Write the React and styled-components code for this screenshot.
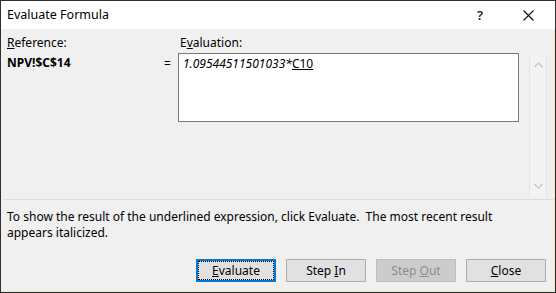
import React from 'react'
import styled, { createGlobalStyle } from 'styled-components'

const Global = createGlobalStyle`
  html, body {
    margin: 0;
    padding: 0;
    background: #f0f0f0;
  }
  * {
    box-sizing: border-box;
  }
`;

function App() {
  return (
    <>
      <Global />
      <Dialog>
        <TitleBar>
          <Title>Evaluate Formula</Title>
          <TitleButtons>
            <HelpBtn>?</HelpBtn>
            <CloseBtn>
              <svg width="11" height="11" viewBox="0 0 11 11">
                <path d="M0.5 0.5 L10.5 10.5 M10.5 0.5 L0.5 10.5" stroke="#111" strokeWidth="1.1" fill="none" />
              </svg>
            </CloseBtn>
          </TitleButtons>
        </TitleBar>
        <Body>
          <Fields>
            <Label><u>R</u>eference:</Label>
            <span />
            <Label $indent>E<u>v</u>aluation:</Label>
            <span />
            <RefValue>NPV!$C$14</RefValue>
            <Equals>=</Equals>
            <FormulaBox>
              <Italic>1.09544511501033*</Italic><u>C10</u>
            </FormulaBox>
            <Scrollbar>
              <Chevron>
                <svg width="9" height="6" viewBox="0 0 9 6">
                  <path d="M0.5 5 L4.5 1 L8.5 5" stroke="#c3c3c3" strokeWidth="1.2" fill="none" />
                </svg>
              </Chevron>
              <Chevron>
                <svg width="9" height="6" viewBox="0 0 9 6">
                  <path d="M0.5 1 L4.5 5 L8.5 1" stroke="#c3c3c3" strokeWidth="1.2" fill="none" />
                </svg>
              </Chevron>
            </Scrollbar>
          </Fields>
          <Separator />
          <Message>
            To show the result of the underlined expression, click Evaluate.&nbsp; The most recent result<br />
            appears italicized.
          </Message>
          <ButtonRow>
            <Button $default><ButtonText $focus><u>E</u>valuate</ButtonText></Button>
            <Button><ButtonText>Step <u>I</u>n</ButtonText></Button>
            <Button disabled><ButtonText>Step <u>O</u>ut</ButtonText></Button>
            <Button><ButtonText><u>C</u>lose</ButtonText></Button>
          </ButtonRow>
        </Body>
      </Dialog>
    </>
  )
}

const Dialog = styled.div`
  width: 556px;
  height: 293px;
  display: flex;
  flex-direction: column;
  border: 1px solid #2e2e2e;
  box-shadow: inset -1px -1px 0 #efe4c6;
  background: #f0f0f0;
  font-family: "Noto Sans", "Open Sans", sans-serif;
  font-size: 12px;
  line-height: 16px;
  color: #000;
  overflow: hidden;
`;
const TitleBar = styled.div`
  height: 28px;
  flex-shrink: 0;
  display: flex;
  align-items: center;
  justify-content: space-between;
  background: #fff;
  padding-left: 6px;
`;
const Title = styled.div`
  font-size: 12.5px;
  color: #000;
`;
const TitleButtons = styled.div`
  display: flex;
  align-items: center;
  height: 100%;
  padding-right: 4px;
`;
const HelpBtn = styled.div`
  width: 50px;
  text-align: center;
  font-size: 13px;
  font-weight: 600;
  color: #222;
`;
const CloseBtn = styled.div`
  width: 46px;
  height: 100%;
  display: flex;
  align-items: center;
  justify-content: center;
`;
const Body = styled.div`
  flex: 1;
  display: flex;
  flex-direction: column;
  padding: 6px 9px 10px 6px;
`;
const Fields = styled.div`
  display: grid;
  grid-template-columns: 150px 21px 341px 1fr;
  grid-template-rows: 18px auto;
`;
const Label = styled.div`
  padding-left: ${p => (p.$indent ? '2px' : '0')};
  color: #000;
`;
const RefValue = styled.div`
  font-weight: 700;
  margin-top: 2px;
`;
const Equals = styled.div`
  text-align: center;
  margin-top: 3px;
`;
const FormulaBox = styled.div`
  height: 69px;
  background: #fff;
  border: 1px solid #7a7a7a;
  padding: 2px 4px;
`;
const Italic = styled.i`
  font-style: italic;
`;
const Scrollbar = styled.div`
  margin-left: 10px;
  margin-top: 2px;
  width: 18px;
  height: 141px;
  display: flex;
  flex-direction: column;
  justify-content: space-between;
  align-items: center;
  background: #f3f3f3;
  border-left: 1px solid #e4e4e4;
  border-right: 1px solid #e4e4e4;
  padding: 6px 0;
`;
const Chevron = styled.div`
  display: flex;
  height: 8px;
  align-items: center;
`;
const Separator = styled.div`
  height: 1px;
  margin: 3px -8px 0 -4px;
  background: #dcdcdc;
`;
const Message = styled.div`
  margin-top: 9px;
  white-space: nowrap;
`;
const ButtonRow = styled.div`
  margin-top: auto;
  display: flex;
  justify-content: flex-end;
  gap: 10px;
`;
const Button = styled.button`
  width: 80px;
  height: 23px;
  font-family: inherit;
  font-size: 12px;
  padding: 0;
  display: flex;
  align-items: center;
  justify-content: center;
  background: #e1e1e1;
  color: #000;
  border: 1px solid ${p => (p.$default ? '#0078d7' : '#adadad')};
  box-shadow: ${p => (p.$default ? 'inset 0 0 0 1px #0078d7' : 'none')};
  &:disabled {
    background: #cccccc;
    border-color: #bfbfbf;
    color: #8d8d8d;
  }
`;
const ButtonText = styled.span`
  display: block;
  white-space: pre;
  text-align: center;
  line-height: 15px;
  ${p => p.$focus && `
    width: 72px;
    height: 15px;
    outline: 1px dotted #000;
    outline-offset: 1px;
  `}
`;

export default App
